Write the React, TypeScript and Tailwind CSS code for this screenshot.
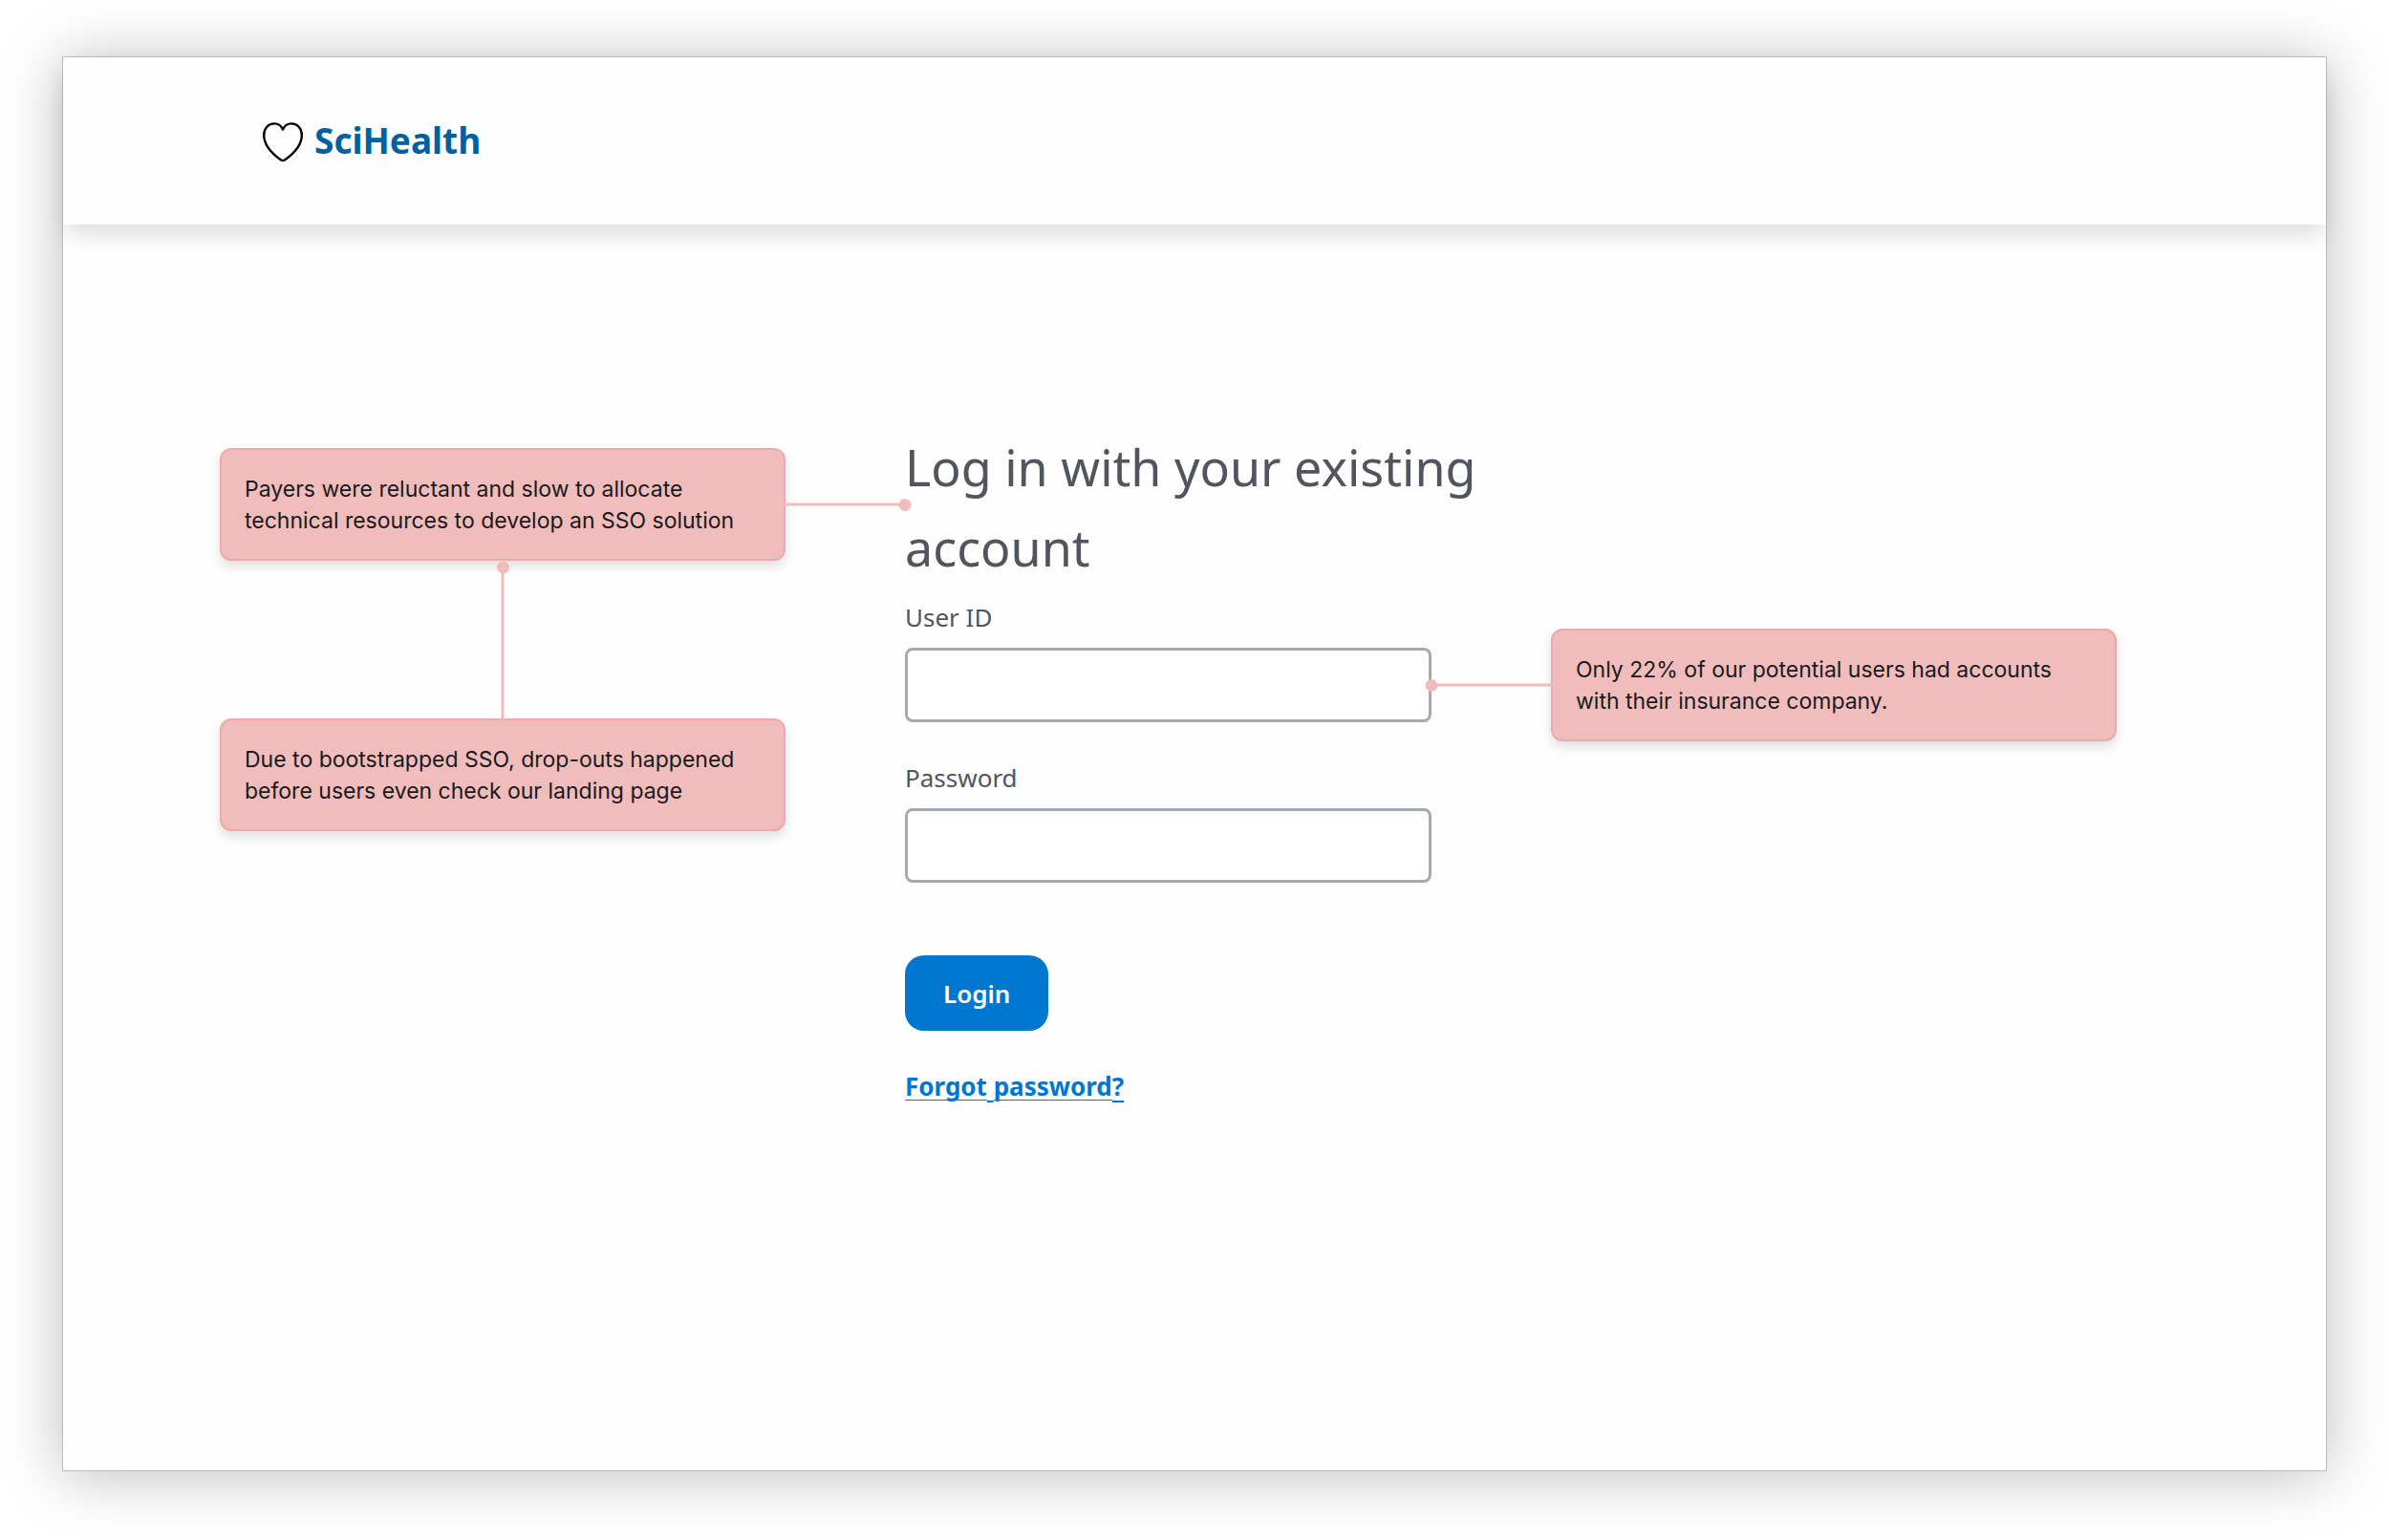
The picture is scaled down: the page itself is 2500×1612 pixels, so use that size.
import { useState, type ReactNode } from "react";
import clsx from "clsx";

const HeartLogo = () => (
    <svg
        viewBox="0 0 42 42"
        className="h-[42px] w-[42px]"
        fill="none"
        stroke="#000"
        strokeWidth="2.4"
        strokeLinejoin="round"
        aria-hidden="true"
    >
        <path d="M21 7.6C19.2 3.4 15.8 1.4 12 1.4C5.8 1.4 1.2 6.4 1.2 13.4C1.2 23.6 10.5 33.3 18.8 39.3Q21 40.8 23.2 39.3C31.5 33.3 40.8 23.6 40.8 13.4C40.8 6.4 36.2 1.4 30 1.4C26.2 1.4 22.8 3.4 21 7.6Z" />
    </svg>
);

const Note = ({
    children,
    connector,
    className,
}: {
    children: ReactNode;
    connector: "right" | "top" | "left";
    className?: string;
}) => (
    <aside
        className={clsx(
            "relative rounded-xl border-2 border-[#eea9aa] bg-[#f0bcbc] px-6 pt-[25px] pb-[23px] text-[23px] leading-[33px] text-[#1a1a1a] shadow-[0_6px_12px_rgba(0,0,0,0.12)]",
            "font-['Inter',sans-serif]",
            className,
        )}
    >
        {children}
        <span
            className={clsx(
                "absolute bg-[#f0bcbc]",
                connector === "right" && "top-1/2 left-full h-[3px] w-[127px] -translate-y-1/2",
                connector === "left" && "top-1/2 right-full h-[3px] w-[127px] -translate-y-1/2",
                connector === "top" && "bottom-full left-1/2 h-[160px] w-[3px] -translate-x-1/2",
            )}
        >
            <span
                className={clsx(
                    "absolute size-[13px] rounded-full bg-[#f0bcbc]",
                    connector === "right" && "top-1/2 left-full -translate-1/2",
                    connector === "left" && "top-1/2 left-0 -translate-1/2",
                    connector === "top" && "top-0 left-1/2 -translate-1/2",
                )}
            />
        </span>
    </aside>
);

const Field = ({
    id,
    label,
    type,
    value,
    onChange,
}: {
    id: string;
    label: string;
    type: string;
    value: string;
    onChange: (value: string) => void;
}) => (
    <div className="flex flex-col gap-[14px]">
        <label htmlFor={id} className="text-[26px] leading-9">
            {label}
        </label>
        <input
            id={id}
            type={type}
            value={value}
            onChange={(e) => onChange(e.target.value)}
            className="h-[78px] w-full rounded-lg border-3 border-[#a2abb2] bg-white px-5 text-[26px] outline-none"
        />
    </div>
);

const App = () => {
    const [userId, setUserId] = useState("");
    const [password, setPassword] = useState("");

    return (
        <div className="flex min-h-screen flex-col bg-white px-[65px] pt-[59px] pb-[72px] font-['Noto_Sans',sans-serif] text-[#50555e]">
            <div className="flex flex-1 flex-col border border-[#bdbdbd] bg-[#fefefe] shadow-[0_4px_60px_rgba(0,0,0,0.26)]">
                <header className="flex h-[175px] items-center bg-[#fefefe] pt-0.5 pl-[209px] shadow-[0_12px_24px_-4px_rgba(0,0,0,0.15)]">
                    <a href="#" className="flex items-center gap-3">
                        <HeartLogo />
                        <span className="pb-1 text-[37px] leading-[48px] font-bold text-[#0060a0]">
                            SciHealth
                        </span>
                    </a>
                </header>

                <main className="grid grid-cols-[592fr_551fr_592fr] items-start gap-x-[125px] pt-[212px] pr-[219px] pb-20 pl-[164px]">
                    <div className="mt-[22px] flex min-w-0 flex-col gap-[165px]">
                        <Note connector="right">
                            Payers were reluctant and slow to allocate
                            <br />
                            technical resources to develop an SSO solution
                        </Note>
                        <Note connector="top">
                            Due to bootstrapped SSO, drop-outs happened
                            <br />
                            before users even check our landing page
                        </Note>
                    </div>

                    <form className="min-w-0" onSubmit={(e) => e.preventDefault()}>
                        <h1 className="mb-[13px] text-[52px] leading-[84px] whitespace-nowrap">
                            Log in with your existing
                            <br />
                            account
                        </h1>
                        <div className="flex flex-col gap-10">
                            <Field
                                id="user-id"
                                label="User ID"
                                type="text"
                                value={userId}
                                onChange={setUserId}
                            />
                            <Field
                                id="password"
                                label="Password"
                                type="password"
                                value={password}
                                onChange={setPassword}
                            />
                        </div>
                        <button
                            type="submit"
                            className="mt-[76px] block h-[79px] rounded-[20px] bg-[#0077cf] px-10 text-[26px] leading-9 font-semibold text-white"
                        >
                            Login
                        </button>
                        <a
                            href="#"
                            className="mt-10 inline-block text-[26px] leading-9 font-bold text-[#0077cf]"
                        >
                            <span className="underline decoration-1 underline-offset-4 [text-decoration-skip-ink:none]">
                                Forgot
                            </span>
                            <span className="underline decoration-2 underline-offset-[5px]"> </span>
                            <span className="underline decoration-1 underline-offset-4 [text-decoration-skip-ink:none]">
                                password
                            </span>
                            <span className="underline decoration-2 underline-offset-[5px]">?</span>
                        </a>
                    </form>

                    <Note connector="left" className="mt-[211px] min-w-0">
                        Only 22% of our potential users had accounts
                        <br />
                        with their insurance company.
                    </Note>
                </main>
            </div>
        </div>
    );
};

export default App;
